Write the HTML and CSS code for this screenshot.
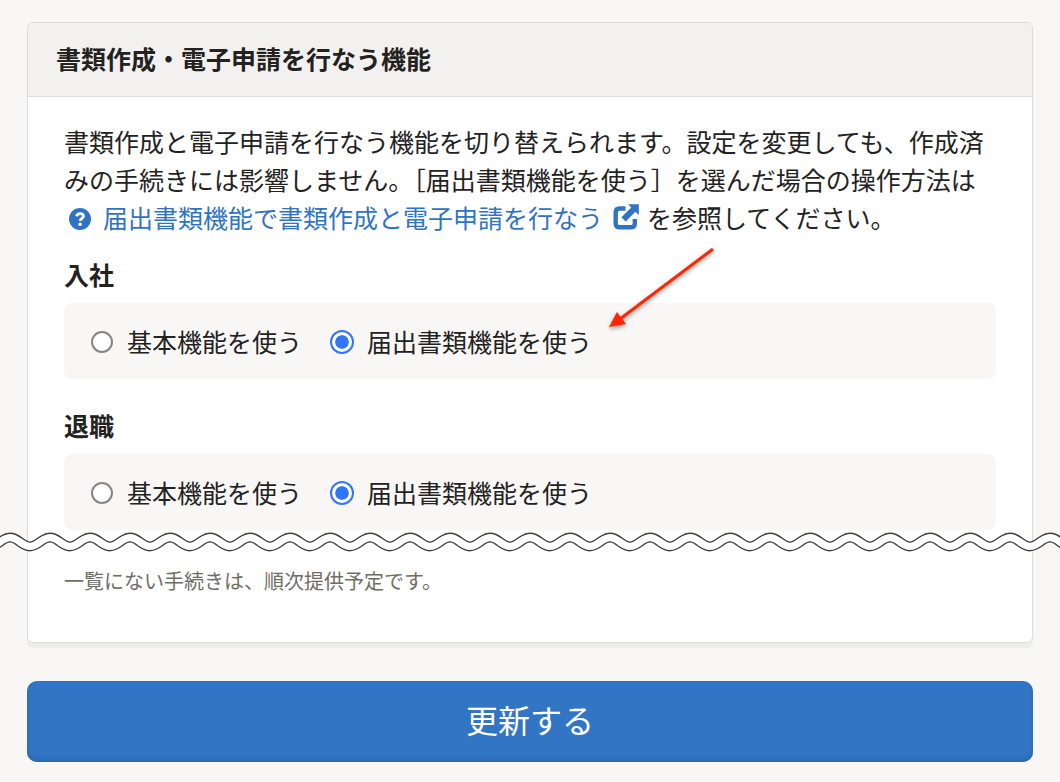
FILE: index.html
```html
<!DOCTYPE html>
<html lang="ja">
<head>
    <meta charset="UTF-8">
    <meta name="viewport" content="width=device-width, initial-scale=1.0">
    <title>書類作成・電子申請を行なう機能</title>
    <link rel="stylesheet" href="styles.css">
</head>
<body>
    <form class="settings">
        <section class="card">
            <header class="card-header">
                <h1>書類作成・電子申請を行なう機能</h1>
            </header>

            <div class="card-body">
                <p class="description">
                    書類作成と電子申請を行なう機能を切り替えられます。設定を変更しても、作成済みの手続きには影響しません。［届出書類機能を使う］を選んだ場合の操作方法は<a class="help-link" href="#"><svg class="icon-help" viewBox="0 0 22 22" aria-hidden="true">
                        <circle cx="11" cy="11" r="11" fill="currentColor"/>
                        <path d="M7.4 8.2C8.2 6.4 9.4 5.6 11.1 5.6C13 5.6 14.4 6.7 14.4 8.3C14.4 10.5 11.2 10.5 11.2 13" fill="none" stroke="#fff" stroke-width="2.8"/>
                        <circle cx="11.1" cy="16.2" r="1.8" fill="#fff"/>
                    </svg>届出書類機能で書類作成と電子申請を行なう<svg class="icon-external" viewBox="0 0 26 26" aria-hidden="true">
                        <path d="M12.5 4.5H6.5Q2.7 4.5 2.7 8.3V19.5Q2.7 23.3 6.5 23.3H18Q21.8 23.3 21.8 19.5V15" fill="none" stroke="currentColor" stroke-width="4.4"/>
                        <path d="M15 .2H25.8V11L22.4 7.7L12.7 17.6L8.4 13.3L18.3 3.5Z" fill="currentColor"/>
                    </svg></a>を参照してください。
                </p>

                <fieldset class="procedure">
                    <legend>入社</legend>
                    <div class="options">
                        <label><input type="radio" name="joining" value="basic">基本機能を使う</label>
                        <label><input type="radio" name="joining" value="documents" checked>届出書類機能を使う</label>
                        <!-- Arrow pointing at the documents option -->
                        <svg class="arrow" viewBox="0 0 120 100" aria-hidden="true">
                            <path d="M109 6L16 76" stroke="#ff2600" stroke-width="3"/>
                            <path d="M5 84L13 69L22 81Z" fill="#ff2600"/>
                        </svg>
                    </div>
                </fieldset>

                <fieldset class="procedure">
                    <legend>退職</legend>
                    <div class="options">
                        <label><input type="radio" name="leaving" value="basic">基本機能を使う</label>
                        <label><input type="radio" name="leaving" value="documents" checked>届出書類機能を使う</label>
                    </div>
                </fieldset>

                <!-- Wavy line for the omitted rows -->
                <div class="omission">
                    <svg class="wave" aria-hidden="true">
                        <defs>
                            <pattern id="wave" width="40" height="24" patternUnits="userSpaceOnUse">
                                <path d="M-30 7.6C-21.5 7.6 -18.5 16.4 -10 16.4S1.5 7.6 10 7.6S21.5 16.4 30 16.4S41.5 7.6 50 7.6" fill="none" stroke="#3c3b39" stroke-width="10"/>
                                <path d="M-30 7.6C-21.5 7.6 -18.5 16.4 -10 16.4S1.5 7.6 10 7.6S21.5 16.4 30 16.4S41.5 7.6 50 7.6" fill="none" stroke="#fff" stroke-width="7.4"/>
                            </pattern>
                        </defs>
                        <rect width="100%" height="24" fill="url(#wave)"/>
                    </svg>
                </div>

                <p class="note">一覧にない手続きは、順次提供予定です。</p>
            </div>
        </section>

        <button class="submit" type="submit">更新する</button>
    </form>
</body>
</html>
```

FILE: styles.css
```css
* {
    margin: 0;
    padding: 0;
    box-sizing: border-box;
}

body {
    font-family: "Noto Sans CJK JP", sans-serif;
    font-size: 25px;
    line-height: 38px;
    color: #23221e;
    background-color: #f8f7f6;
    overflow-x: hidden;
}

.settings {
    padding: 22px 27px 20px;
}

/* Card */
.card {
    background-color: #fff;
    border: 1px solid #dadbdd;
    border-radius: 6px;
    box-shadow: 0 5px 1px #ededec;
}

.card-header {
    padding: 16px 28px 19px;
    background-color: #f2f1f0;
    border-bottom: 1px solid #dadbdd;
    border-radius: 5px 5px 0 0;
}

.card-header h1 {
    font-size: 25px;
    font-weight: 700;
}

.card-body {
    padding: 25px 36px 46px;
}

.description {
    margin-bottom: 19px;
}

.help-link {
    color: #3073c3;
    text-decoration: none;
}

.icon-help {
    width: 22px;
    height: 22px;
    margin: 0 12px 0 5px;
    vertical-align: -2px;
}

.icon-external {
    width: 26px;
    height: 26px;
    margin: 0 8px 0 10px;
    vertical-align: -2px;
}

/* Procedures */
.procedure {
    border: 0;
}

.procedure + .procedure {
    margin-top: 27px;
}

.procedure legend {
    font-weight: 700;
}

.options {
    position: relative;
    display: flex;
    flex-wrap: wrap;
    gap: 28px;
    margin-top: 10px;
    padding: 19px 26px;
    background-color: #f8f7f6;
    border-radius: 8px;
}

.options label {
    display: flex;
    align-items: center;
    gap: 13px;
}

.options input {
    appearance: none;
    width: 22px;
    height: 22px;
    margin: 2px 1px 0;
    background-color: #fff;
    border: 2px solid #858585;
    border-radius: 50%;
}

.options input:checked {
    width: 24px;
    height: 24px;
    margin: 2px 0 0;
    padding: 3px;
    background: #3075ff content-box;
    border-color: #3075ff;
    box-shadow: inset 0 0 0 3px #fff;
}

.arrow {
    position: absolute;
    top: -60px;
    left: 540px;
    width: 120px;
    height: 100px;
    filter: drop-shadow(0 2px 2px rgba(0, 0, 0, 0.4));
}

/* Runs past both edges of the card */
.omission {
    margin: 0 -64px;
    padding-bottom: 12px;
}

.wave {
    display: block;
    width: 100%;
    height: 24px;
}

.note {
    font-size: 20px;
    line-height: 30px;
    color: #706d65;
}

.submit {
    display: block;
    width: 100%;
    margin-top: 38px;
    padding: 14px 16px 18px;
    font-family: inherit;
    font-size: 32px;
    line-height: 49px;
    color: #fff;
    background-color: #3275c4;
    border: 0;
    border-radius: 10px;
    box-shadow: inset 0 -3px 4px #2c68ae;
    cursor: pointer;
}
```
